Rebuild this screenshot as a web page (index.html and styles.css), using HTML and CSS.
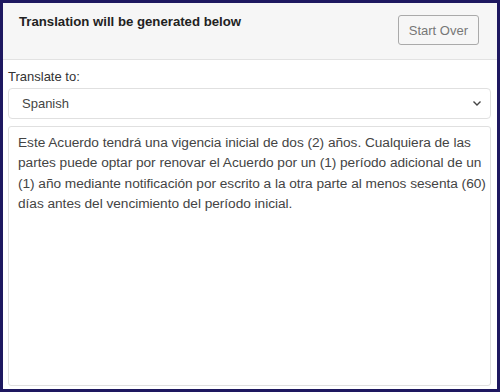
FILE: index.html
```html
<!DOCTYPE html>
<html>
<head>
<meta charset="utf-8">
<link rel="stylesheet" href="styles.css">
</head>
<body>
<div class="frame">
  <div class="header">
    <div class="title">Translation will be generated below</div>
    <button class="btn">Start Over</button>
  </div>
  <div class="content">
    <label class="label">Translate to:</label>
    <div class="select">
      <span>Spanish</span>
      <svg class="chev" width="10" height="7" viewBox="0 0 10 7"><path d="M1.5 1.5 L5 5 L8.5 1.5" fill="none" stroke="#444" stroke-width="1.4"/></svg>
    </div>
    <div class="output">Este Acuerdo tendrá una vigencia inicial de dos (2) años. Cualquiera de las partes puede optar por renovar el Acuerdo por un (1) período adicional de un (1) año mediante notificación por escrito a la otra parte al menos sesenta (60) días antes del vencimiento del período inicial.</div>
  </div>
</div>
</body>
</html>
```

FILE: styles.css
```css
html, body {
  margin: 0;
  padding: 0;
  background: #1e1860;
}
.frame {
  box-sizing: border-box;
  width: 500px;
  height: 392px;
  border: 3px solid #1e1860;
  background: #fff;
  display: flex;
  flex-direction: column;
  font-family: "Liberation Sans", Arial, sans-serif;
  color: #333;
}
.header {
  box-sizing: border-box;
  height: 57px;
  background: #f6f6f6;
  border-bottom: 1px solid #e2e2e2;
  display: flex;
  justify-content: space-between;
  align-items: flex-start;
  padding: 0 18px 0 16px;
}
.title {
  font-weight: bold;
  font-size: 13.2px;
  color: #222;
  margin-top: 11px;
}
.btn {
  margin-top: 12px;
  height: 30px;
  padding: 0 10px;
  font-family: "Liberation Sans", Arial, sans-serif;
  font-size: 13px;
  color: #777;
  background: #f6f6f6;
  border: 1px solid #aaa;
  border-radius: 3px;
}
.content {
  flex: 1;
  display: flex;
  flex-direction: column;
  padding: 9px 6px 3px 5px;
}
.label {
  font-size: 13px;
  color: #333;
  line-height: 16px;
}
.select {
  box-sizing: border-box;
  margin-top: 3px;
  height: 31px;
  border: 1px solid #e0e0e0;
  border-radius: 4px;
  display: flex;
  align-items: center;
  justify-content: space-between;
  padding: 0 8px 0 13px;
  font-size: 13px;
  color: #444;
}
.chev {
  display: block;
}
.output {
  box-sizing: border-box;
  flex: 1;
  margin-top: 7px;
  border: 1px solid #e0e0e0;
  border-radius: 3px;
  padding: 6px 3px 6px 9px;
  font-size: 13.7px;
  letter-spacing: -0.04px;
  line-height: 20.4px;
  color: #444;
}
```
